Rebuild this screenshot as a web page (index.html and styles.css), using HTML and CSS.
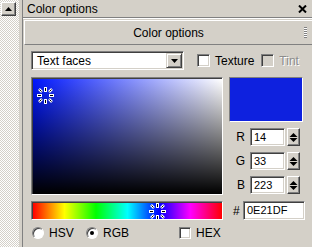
FILE: index.html
```html
<!DOCTYPE html>
<html lang="en">
  <head>
    <title>Color options</title>
    <link rel="stylesheet" href="styles.css">
  </head>
  <body>
    <div class="window">
      <div class="rail">
        <div class="rail-btn">
          <svg width="7" height="4" viewBox="0 0 7 4"><polygon points="0,4 3.5,0 7,4" fill="#000" /></svg>
        </div>
      </div>
      <div class="dock">
        <div class="titlebar">
          <span>Color options</span>
          <svg class="close" width="9" height="8" viewBox="0 0 9 8">
            <path d="M1 0.5 L8 7.5 M8 0.5 L1 7.5" stroke="#000" stroke-width="2" />
          </svg>
        </div>
        <div class="panel-head">
          <span></span>
          <span class="head-text">Color options</span>
          <span class="grip"></span>
        </div>
        <div class="panel-body">
          <div class="top-row">
            <div class="combo">
              <span class="combo-text">Text faces</span>
              <span class="combo-btn">
                <svg width="7" height="4" viewBox="0 0 7 4"><polygon points="0,0 7,0 3.5,4" fill="#000" /></svg>
              </span>
            </div>
            <div class="check">
              <span class="box"></span><span>Texture</span>
            </div>
            <div class="check disabled">
              <span class="box"></span><span>Tint</span>
            </div>
          </div>

          <div class="picker">
            <div class="sv-field">
              <div class="sv-inner">
                <svg class="marker sv-marker" width="17" height="17" viewBox="0 0 17 17">
                  <rect x="7.5" y="0.5" width="2" height="4" fill="#000" stroke="#fff" />
                  <rect x="7.5" y="12.5" width="2" height="4" fill="#000" stroke="#fff" />
                  <rect x="0.5" y="7.5" width="4" height="2" fill="#000" stroke="#fff" />
                  <rect x="12.5" y="7.5" width="4" height="2" fill="#000" stroke="#fff" />
                  <path d="M2 2 L5 5 M15 2 L12 5 M2 15 L5 12 M15 15 L12 12" stroke="#fff" stroke-width="2.6" />
                  <path d="M2.5 2.5 L4.5 4.5 M14.5 2.5 L12.5 4.5 M2.5 14.5 L4.5 12.5 M14.5 14.5 L12.5 12.5" stroke="#000" stroke-width="1" />
                </svg>
              </div>
            </div>

            <div class="side">
              <div class="swatch"></div>
              <div class="spin-row">
                <span class="spin-label">R</span>
                <span class="field num">14</span>
                <span class="spin-btn">
                  <svg width="9" height="11" viewBox="0 0 9 11"><polygon points="0.5,5 4.5,1 8.5,5" fill="#000" /><polygon points="0.5,6 8.5,6 4.5,10" fill="#000" /></svg>
                </span>
              </div>
              <div class="spin-row">
                <span class="spin-label">G</span>
                <span class="field num">33</span>
                <span class="spin-btn">
                  <svg width="9" height="11" viewBox="0 0 9 11"><polygon points="0.5,5 4.5,1 8.5,5" fill="#000" /><polygon points="0.5,6 8.5,6 4.5,10" fill="#000" /></svg>
                </span>
              </div>
              <div class="spin-row">
                <span class="spin-label">B</span>
                <span class="field num">223</span>
                <span class="spin-btn">
                  <svg width="9" height="11" viewBox="0 0 9 11"><polygon points="0.5,5 4.5,1 8.5,5" fill="#000" /><polygon points="0.5,6 8.5,6 4.5,10" fill="#000" /></svg>
                </span>
              </div>
            </div>

            <div class="hue-bar">
              <div class="hue-inner">
                <svg class="marker hue-marker" width="17" height="17" viewBox="0 0 17 17">
                  <rect x="7.5" y="0.5" width="2" height="4" fill="#000" stroke="#fff" />
                  <rect x="7.5" y="12.5" width="2" height="4" fill="#000" stroke="#fff" />
                  <rect x="0.5" y="7.5" width="4" height="2" fill="#000" stroke="#fff" />
                  <rect x="12.5" y="7.5" width="4" height="2" fill="#000" stroke="#fff" />
                  <path d="M2 2 L5 5 M15 2 L12 5 M2 15 L5 12 M15 15 L12 12" stroke="#fff" stroke-width="2.6" />
                  <path d="M2.5 2.5 L4.5 4.5 M14.5 2.5 L12.5 4.5 M2.5 14.5 L4.5 12.5 M14.5 14.5 L12.5 12.5" stroke="#000" stroke-width="1" />
                </svg>
              </div>
            </div>

            <div class="hex-row">
              <span class="hash">#</span>
              <span class="field hex">0E21DF</span>
            </div>
          </div>

          <div class="mode-row">
            <div class="opt opt-hsv"><span class="radio"></span><span>HSV</span></div>
            <div class="opt opt-rgb"><span class="radio on"></span><span>RGB</span></div>
            <div class="check"><span class="box"></span><span>HEX</span></div>
          </div>
        </div>
      </div>
    </div>
  </body>
</html>
```

FILE: styles.css
```css
body {
  margin: 0;
  background: #d4d0c8;
  font-family: "Liberation Sans", Arial, sans-serif;
  font-size: 12px;
  color: #000;
}
.window {
  display: flex;
  height: 247px;
  overflow: hidden;
}
.rail {
  width: 19px;
  flex: none;
  background: repeating-conic-gradient(#fff 0 25%, #d4d0c8 0 50%) 0 0 / 2px 2px;
}
.rail-btn {
  margin: 2px 0 0 1px;
  width: 15px;
  height: 14px;
  box-sizing: border-box;
  background: #d4d0c8;
  border: 1px solid;
  border-color: #fff #404040 #404040 #fff;
  box-shadow: inset -1px -1px #808080;
  display: flex;
  align-items: center;
  justify-content: center;
}
.dock {
  flex: 1;
  margin-left: 3px;
  border-left: 1px solid #808080;
}
.titlebar {
  height: 17px;
  display: flex;
  align-items: center;
  justify-content: space-between;
  padding: 0 5px 0 4px;
  border-bottom: 1px solid #808080;
  box-shadow: 0 1px #fff;
}
.panel-head {
  margin: 2px 0 0 1px;
  height: 25px;
  box-sizing: border-box;
  border-top: 1px solid #fff;
  border-left: 1px solid #fff;
  border-bottom: 1px solid #808080;
  display: grid;
  grid-template-columns: 1fr auto 1fr;
  align-items: center;
}
.grip {
  justify-self: end;
  margin-right: 5px;
  width: 3px;
  height: 11px;
  background: repeating-linear-gradient(to bottom, #808080 0 1px, #fff 1px 2px);
}
.panel-body {
  padding: 6px 0 0 8px;
}
.top-row {
  display: flex;
  align-items: center;
  height: 19px;
  margin-bottom: 7px;
}
.combo {
  width: 153px;
  height: 19px;
  box-sizing: border-box;
  margin-right: 13px;
  background: #fff;
  display: flex;
  align-items: center;
  justify-content: space-between;
  border: 1px solid;
  border-color: #808080 #fff #fff #808080;
  box-shadow: inset 1px 1px #404040, inset -1px -1px #d4d0c8;
  padding: 1px;
}
.combo-text {
  padding-left: 4px;
}
.combo-btn {
  width: 16px;
  height: 15px;
  box-sizing: border-box;
  background: #d4d0c8;
  border: 1px solid;
  border-color: #d4d0c8 #404040 #404040 #d4d0c8;
  box-shadow: inset 1px 1px #fff, inset -1px -1px #808080;
  display: flex;
  align-items: center;
  justify-content: center;
}
.check {
  display: flex;
  align-items: center;
  gap: 5px;
}
.check + .check {
  margin-left: 7px;
}
.box {
  width: 13px;
  height: 13px;
  box-sizing: border-box;
  background: #fff;
  border: 1px solid;
  border-color: #808080 #fff #fff #808080;
  box-shadow: inset 1px 1px #404040, inset -1px -1px #d4d0c8;
}
.disabled {
  color: #8c8c8c;
  text-shadow: 1px 1px #fff;
}
.disabled .box {
  background: #d4d0c8;
}
.picker {
  display: grid;
  grid-template-columns: 192px 76px;
  column-gap: 6px;
  row-gap: 6px;
}
.sv-field,
.hue-bar {
  box-sizing: border-box;
  border: 1px solid;
  border-color: #808080 #fff #fff #808080;
  box-shadow: inset 1px 1px #404040;
  padding: 1px 0 0 1px;
}
.sv-field {
  height: 118px;
}
.sv-inner,
.hue-inner {
  position: relative;
  height: 100%;
  overflow: hidden;
}
.sv-inner {
  background: linear-gradient(to bottom, rgba(0, 0, 0, 0), #000),
    linear-gradient(to right, rgb(0, 23, 255), #fff);
}
.hue-bar {
  height: 19px;
}
.hue-inner {
  background: linear-gradient(to right, #f00, #ff0, #0f0, #0ff, #00f, #f0f, #f00);
}
.marker {
  position: absolute;
  display: block;
}
.sv-marker {
  left: 4px;
  top: 8px;
}
.hue-marker {
  left: 116px;
  top: 0px;
}
.side {
  display: flex;
  flex-direction: column;
  gap: 6px;
}
.swatch {
  width: 74px;
  height: 45px;
  box-sizing: border-box;
  background: #0e21df;
  border: 1px solid;
  border-color: #808080 #fff #fff #808080;
}
.spin-row {
  display: flex;
  align-items: center;
  height: 18px;
}
.spin-label {
  width: 16px;
  padding-right: 5px;
  text-align: right;
}
.field {
  height: 18px;
  box-sizing: border-box;
  background: #fff;
  border: 1px solid;
  border-color: #808080 #fff #fff #808080;
  box-shadow: inset 1px 1px #404040, inset -1px -1px #d4d0c8;
  padding: 0 3px;
  font-size: 11px;
  line-height: 16px;
}
.num {
  width: 35px;
}
.spin-btn {
  margin-left: 2px;
  width: 13px;
  height: 18px;
  box-sizing: border-box;
  border: 1px solid;
  border-color: #fff #404040 #404040 #fff;
  box-shadow: inset -1px -1px #808080;
  display: flex;
  align-items: center;
  justify-content: center;
}
.hex-row {
  display: flex;
  align-items: center;
  padding-left: 4px;
}
.hash {
  width: 10px;
}
.hex {
  width: 62px;
  height: 19px;
  line-height: 17px;
}
.mode-row {
  display: flex;
  align-items: center;
  margin-top: 6px;
  padding-left: 1px;
}
.opt {
  display: flex;
  align-items: center;
  gap: 5px;
}
.opt-hsv {
  width: 54px;
}
.opt-rgb {
  width: 93px;
}
.radio {
  width: 12px;
  height: 12px;
  box-sizing: border-box;
  border-radius: 50%;
  background: #fff;
  border: 1px solid;
  border-color: #808080 #fff #fff #808080;
  box-shadow: inset 1px 1px #404040;
  display: flex;
  align-items: center;
  justify-content: center;
}
.radio.on::after {
  content: "";
  width: 4px;
  height: 4px;
  border-radius: 50%;
  background: #000;
}
.mode-row .box {
  width: 12px;
  height: 12px;
}
```
